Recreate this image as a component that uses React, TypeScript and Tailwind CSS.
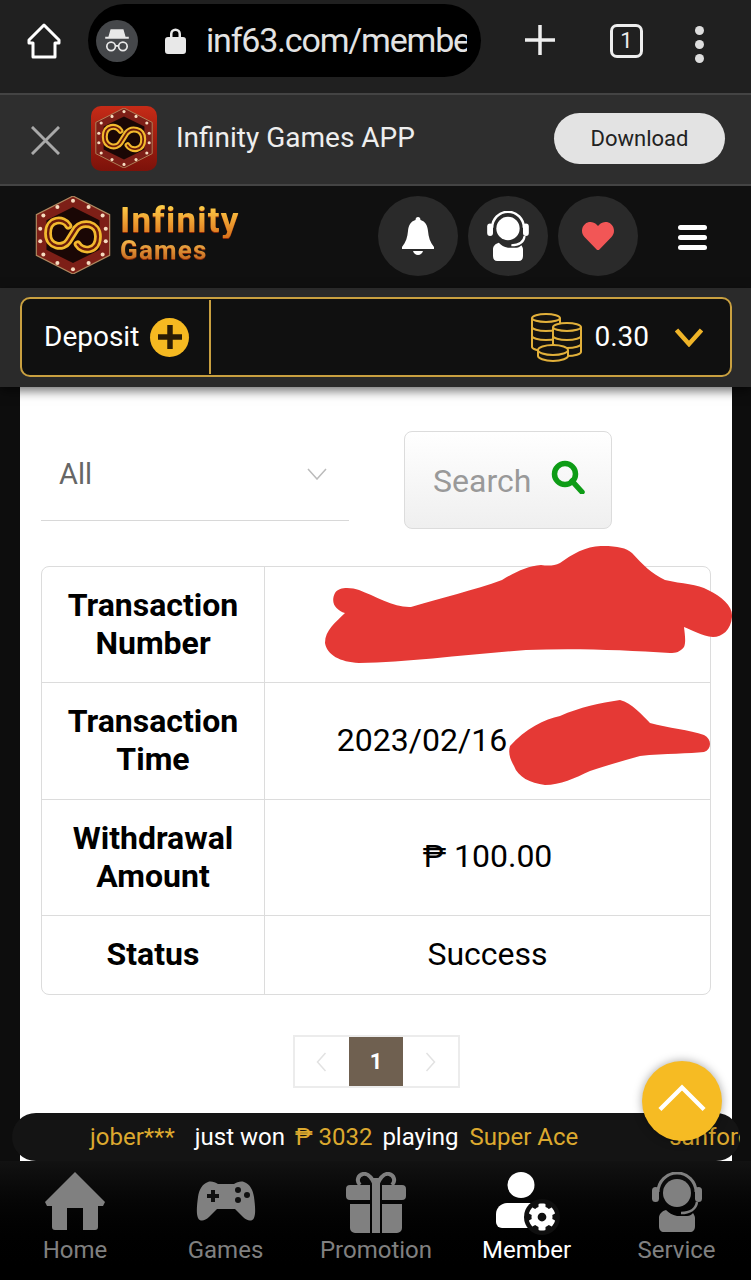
import React from 'react';
import { FaHeart, FaCog } from 'react-icons/fa';

const rows = [
  { label: ['Transaction', 'Number'], value: '', height: 'h-[115px]' },
  { label: ['Transaction', 'Time'], value: '2023/02/16', height: 'h-[117px]' },
  { label: ['Withdrawal', 'Amount'], value: '₱ 100.00', height: 'h-[116px]' },
  { label: ['Status'], value: 'Success', height: 'h-[79px]' },
];

const knotPath = 'M56 62C62 72 82 72 82 52C82 34 62 32 54 42L44 58C38 68 18 66 18 48C18 28 38 28 44 38';

const HexBadge = ({ className }: { className: string }) => {
  const dots = [
    [50, 6], [30, 14], [12, 25], [8, 42], [8, 58], [12, 75], [30, 86], [50, 94],
    [70, 86], [88, 75], [92, 58], [92, 42], [88, 25], [70, 14],
  ];
  return (
    <svg viewBox="0 0 100 100" className={className}>
      <polygon points="50,0 97,24 97,76 50,100 3,76 3,24" fill="#7d1f17" stroke="#b08a60" strokeWidth="1.5" />
      <polygon points="50,14 84,31 84,69 50,86 16,69 16,31" fill="#1a0705" />
      {dots.map(([cx, cy]) => (
        <circle key={`${cx}-${cy}`} cx={cx} cy={cy} r="2.6" fill="#f6dcc0" />
      ))}
      <path d={knotPath} fill="none" stroke="#f2b92e" strokeWidth="10" strokeLinecap="round" />
      <path d={knotPath} fill="none" stroke="#6a1a0a" strokeWidth="3" strokeLinecap="round" />
    </svg>
  );
};

const AgentIcon = ({ className }: { className: string }) => (
  <svg viewBox="0 0 50 60" className={className} fill="currentColor">
    <rect x="0" y="15" width="7" height="15" rx="3.5" />
    <rect x="43" y="15" width="7" height="15" rx="3.5" />
    <path d="M6 20A19 19 0 0 1 44 20" fill="none" stroke="currentColor" strokeWidth="3" />
    <circle cx="25" cy="21" r="14" />
    <path d="M7 54V46C7 42 10 39 14 38C17 41 20 43 25 44L35 44C38 44 40 42 41 41C42 43 43 44 43 46V54C43 58 41 60 38 60H12C9 60 7 58 7 54Z" />
    <path d="M45 30C44 37 38 41 29 41" fill="none" stroke="currentColor" strokeWidth="2.5" />
  </svg>
);

const Coins = () => (
  <svg viewBox="0 0 51 49" className="w-[51px] h-[49px]" fill="#141210" stroke="#e2b03a" strokeWidth="2">
    <path d="M1 5v29c0 2 6 4 14 4s14-2 14-4V5" />
    <ellipse cx="15" cy="5" rx="14" ry="4" />
    <path d="M1 14c0 2 6 4 14 4s14-2 14-4M1 23c0 2 6 4 14 4s14-2 14-4" fill="none" />
    <path d="M22 14v25c0 2 6 4 14 4s14-2 14-4V14" />
    <ellipse cx="36" cy="14" rx="14" ry="4" />
    <path d="M22 23c0 2 6 4 14 4s14-2 14-4M22 31c0 2 6 4 14 4s14-2 14-4" fill="none" />
    <path d="M7 37v6c0 2 6 5 15 5s15-3 15-5v-6" />
    <ellipse cx="22" cy="37" rx="15" ry="5" />
  </svg>
);

const navItems = [
  {
    label: 'Home',
    icon: (
      <svg viewBox="0 0 60 58" className="w-[60px] h-[58px]" fill="currentColor">
        <path d="M30 0 60 30l-2 4h-5v21a3 3 0 0 1-3 3H38V36H22v22H10a3 3 0 0 1-3-3V34H2l-2-4z" />
      </svg>
    ),
  },
  {
    label: 'Games',
    icon: (
      <svg viewBox="0 0 60 40" className="w-[60px] h-[40px] mt-[9px]" fill="currentColor">
        <path d="M12 1C15 0 19 1 22 3H38C41 1 45 0 48 1C54 3 57 9 58 16C59 24 60 32 58 37C56 41 51 40 47 36L39 28H21L13 36C9 40 4 41 2 37C0 32 1 24 2 16C3 9 6 3 12 1Z" />
        <path d="M15 9h4v4h4v4h-4v4h-4v-4h-4v-4h4z" fill="#101010" />
        <circle cx="42" cy="9" r="3" fill="#101010" />
        <circle cx="51" cy="14" r="3" fill="#101010" />
        <circle cx="42" cy="19" r="3" fill="#101010" />
      </svg>
    ),
  },
  {
    label: 'Promotion',
    icon: (
      <svg viewBox="0 0 60 61" className="w-[60px] h-[61px]" fill="currentColor">
        <path d="M29 13C26 6 22 1 17 2C12 3 10 9 14 13M31 13C34 6 38 1 43 2C48 3 50 9 46 13" fill="none" stroke="currentColor" strokeWidth="4" />
        <path d="M4 13h20v15H4a4 4 0 0 1-4-4v-7a4 4 0 0 1 4-4zM36 13h20a4 4 0 0 1 4 4v7a4 4 0 0 1-4 4H36z" />
        <path d="M26 6h8v55h-8zM4 32h20v29H9a5 5 0 0 1-5-5zM36 32h20v24a5 5 0 0 1-5 5H36z" />
      </svg>
    ),
  },
  {
    label: 'Member',
    active: true,
    icon: (
      <div className="relative w-[62px] h-[61px]">
        <svg viewBox="0 0 62 61" className="w-[62px] h-[61px]" fill="currentColor">
          <ellipse cx="25" cy="13" rx="13.500" ry="13" />
          <path d="M0 50V42c0-6 5-11 11-11h25c4 0 8 2 8 8v17H6a6 6 0 0 1-6-6z" />
        </svg>
        <div className="absolute right-[-2px] bottom-[-2px] w-[36px] h-[36px] rounded-full bg-[#0f0f0f] flex items-center justify-center">
          <FaCog className="w-[28px] h-[28px]" />
        </div>
      </div>
    ),
  },
  { label: 'Service', icon: <AgentIcon className="w-[50px] h-[60px]" /> },
];

export default function App() {
  return (
    <div className="relative w-[751px] h-[1280px] overflow-hidden flex flex-col bg-[#0d0d0d] font-['Roboto',sans-serif]">
      {/* browser toolbar */}
      <div className="h-[93px] shrink-0 bg-[#202020] flex items-start text-white">
        <svg viewBox="0 0 34 36" className="w-[34px] h-[36px] ml-[27px] mt-[23px]" fill="none" stroke="#fff" strokeWidth="3" strokeLinejoin="round">
          <path d="M17 2 32 17v3h-4v14H6V20H2v-3z" />
        </svg>
        <div className="w-[393px] h-[73px] mt-[4px] ml-[27px] rounded-full bg-black flex items-center overflow-hidden">
          <div className="w-[42px] h-[42px] ml-[8px] rounded-full bg-[#45474a] flex items-center justify-center">
            <svg viewBox="0 0 28 28" className="w-[30px] h-[30px]" fill="none" stroke="#e8e8e8">
              <path d="M8 3h12l2 7h3v2H3v-2h3z" fill="#e8e8e8" stroke="none" />
              <circle cx="8.5" cy="19" r="4" strokeWidth="1.6" />
              <circle cx="19.5" cy="19" r="4" strokeWidth="1.6" />
              <path d="M12.5 18.5h3" strokeWidth="1.6" />
            </svg>
          </div>
          <svg viewBox="0 0 21 27" className="w-[21px] h-[27px] ml-[27px]" fill="#e8e8e8">
            <path d="M5 10V7a5.500 5.500 0 0 1 11 0v3h2a3 3 0 0 1 3 3v11a3 3 0 0 1-3 3H3a3 3 0 0 1-3-3V13a3 3 0 0 1 3-3zm2.500 0h6V7a3 3 0 0 0-6 0z" />
          </svg>
          <span className="ml-[20px] w-[261px] overflow-hidden whitespace-nowrap text-[34px] tracking-[-1.2px] text-[#e3e3e3]">inf63.com/member</span>
        </div>
        <svg viewBox="0 0 30 30" className="w-[30px] h-[30px] ml-[44px] mt-[25px]" stroke="#eee" strokeWidth="3.500">
          <path d="M15 0v30M0 15h30" />
        </svg>
        <div className="w-[33px] h-[34px] ml-[55px] mt-[24px] rounded-[7px] border-[3px] border-[#eee] flex items-center justify-center text-[22px] leading-none text-[#eee]">1</div>
        <div className="ml-[52px] mt-[26px] flex flex-col gap-[5px]">
          <span className="w-[9px] h-[9px] rounded-full bg-[#ddd]" />
          <span className="w-[9px] h-[9px] rounded-full bg-[#ddd]" />
          <span className="w-[9px] h-[9px] rounded-full bg-[#ddd]" />
        </div>
      </div>

      {/* app download banner */}
      <div className="h-[93px] shrink-0 bg-[#2e2e2e] border-t-2 border-b-2 border-[#444] pb-[3px] flex items-center">
        <svg viewBox="0 0 30 30" className="w-[29px] h-[29px] ml-[31px] mt-[5px]" stroke="#a9a9a9" strokeWidth="3">
          <path d="M1 1l28 28M29 1 1 29" />
        </svg>
        <div className="w-[66px] h-[65px] ml-[31px] rounded-[10px] bg-gradient-to-b from-[#c62b17] to-[#7c120a] flex items-center justify-center">
          <HexBadge className="w-[60px] h-[60px]" />
        </div>
        <span className="ml-[19px] text-[28px] text-[#eee]">Infinity Games APP</span>
        <button className="w-[171px] h-[51px] ml-auto mr-[26px] rounded-full bg-[#e3e3e3] text-[22px] text-[#222]">Download</button>
      </div>

      {/* site header */}
      <div className="h-[102px] shrink-0 bg-[#101010] flex items-center">
        <HexBadge className="w-[78px] h-[78px] ml-[34px] mb-[4px]" />
        <div className="ml-[8px] mb-[8px] flex flex-col font-bold [filter:drop-shadow(0_1px_0_#8a2a08)]">
          <span className="text-[35px] leading-[34px] tracking-[1.2px] bg-gradient-to-b from-[#ffd24a] to-[#d9701a] bg-clip-text text-transparent">Infinity</span>
          <span className="text-[26px] leading-[24px] tracking-[1.2px] bg-gradient-to-b from-[#f8c050] to-[#c0601a] bg-clip-text text-transparent">Games</span>
        </div>
        <div className="ml-auto mb-[2px] flex items-center gap-[10px] text-white">
          <div className="w-[80px] h-[80px] rounded-full bg-[#2a2a2a] flex items-center justify-center">
            <svg viewBox="0 0 32 38" className="w-[32px] h-[38px]" fill="currentColor">
              <path d="M16 0c1.500 0 2.500 1.200 2.500 3 5 1.500 7 5.500 7.500 11 .5 6 2 11 6 16v2H0v-2c4-5 5.500-10 6-16C6.500 8.500 8.500 4.500 13.500 3 13.500 1.200 14.500 0 16 0z" />
              <path d="M11 34h10c-.5 2-2.500 4-5 4s-4.500-2-5-4z" />
            </svg>
          </div>
          <div className="w-[80px] h-[80px] rounded-full bg-[#2a2a2a] flex items-center justify-center">
            <AgentIcon className="w-[42px] h-[50px]" />
          </div>
          <div className="w-[80px] h-[80px] rounded-full bg-[#2a2a2a] flex items-center justify-center">
            <FaHeart className="w-[34px] h-[32px] text-[#f25656]" />
          </div>
        </div>
        <div className="ml-[40px] mr-[44px] flex flex-col gap-[5px]">
          <span className="w-[29px] h-[5px] rounded-sm bg-white" />
          <span className="w-[29px] h-[5px] rounded-sm bg-white" />
          <span className="w-[29px] h-[5px] rounded-sm bg-white" />
        </div>
      </div>

      {/* wallet bar */}
      <div className="relative z-10 h-[99px] shrink-0 bg-[#2a2a2a] pl-[20px] pr-[19px] pt-[9px] shadow-[0_4px_10px_rgba(0,0,0,0.55)]">
        <div className="h-[80px] rounded-[10px] border-2 border-[#c9a040] bg-[#101010] flex items-center text-white">
          <span className="ml-[22px] text-[28px]">Deposit</span>
          <div className="w-[39px] h-[39px] ml-[11px] rounded-full bg-[#f5b921] flex items-center justify-center">
            <svg viewBox="0 0 22 22" className="w-[24px] h-[24px]" stroke="#2a1c05" strokeWidth="5">
              <path d="M11 0v22M0 11h22" />
            </svg>
          </div>
          <div className="w-[2px] h-[74px] ml-[20px] bg-[#c9a040]" />
          <div className="ml-auto flex items-center">
            <Coins />
            <span className="ml-[12px] text-[28px]">0.30</span>
            <svg viewBox="0 0 28 19" className="w-[28px] h-[19px] ml-[26px] mr-[27px]" fill="none" stroke="#efb428" strokeWidth="4.500">
              <path d="M1.500 2 14 16 26.500 2" />
            </svg>
          </div>
        </div>
      </div>

      {/* page content */}
      <div className="flex-1 min-h-0 ml-[20px] mr-[19px] bg-white px-[21px] pt-[44px]">
        <div className="flex items-start">
          <div className="relative w-[308px] h-[90px] border-b border-[#d8d8d8] flex items-start">
            <span className="ml-[18px] text-[29px] leading-[86px] text-[#666]">All</span>
            <svg viewBox="0 0 20 12" className="absolute left-[266px] top-[37px] w-[20px] h-[12px]" fill="none" stroke="#bbb" strokeWidth="1.500">
              <path d="M1 1l9 10 9-10" />
            </svg>
          </div>
          <button className="w-[208px] h-[98px] ml-[55px] rounded-[8px] border border-[#dcdcdc] bg-gradient-to-b from-white to-[#efefef] flex items-center">
            <span className="ml-[28px] mt-[1px] text-[32px] text-[#999]">Search</span>
            <svg viewBox="0 0 34 34" className="w-[34px] h-[34px] ml-[20px] mb-[6px]" fill="none" stroke="#0e9c16" strokeWidth="5.500">
              <circle cx="14" cy="14" r="10.500" />
              <path d="M21 21 31 32" strokeLinecap="round" />
            </svg>
          </button>
        </div>

        <div className="mt-[37px] rounded-[8px] border border-[#dcdcdc] text-black">
          {rows.map((row, i) => (
            <div key={row.label[0] + i} className={`grid grid-cols-[223px_1fr] ${row.height} ${i > 0 ? 'border-t border-[#dcdcdc]' : ''}`}>
              <div className="flex flex-col items-center justify-center pb-[2px] text-[32px] leading-[38px] font-bold border-r border-[#dcdcdc]">
                {row.label.map((line) => (
                  <span key={line}>{line}</span>
                ))}
              </div>
              <div className="relative flex items-center justify-center pb-[3px] text-[32px]">
                {i === 1 ? <span className="mr-[131px]">{row.value}</span> : row.value}
                {i === 0 && (
                  <svg viewBox="320 540 420 130" className="absolute left-[55px] top-[-27px] w-[420px] h-[130px]" fill="#e53935">
                    <path d="M335 593C340 586 352 588 359 590C375 596 395 608 411 607C440 598 475 590 502 580C515 572 528 566 541 565C548 566 554 566 560 563C572 554 588 545 603 546C618 546 626 548 632 553C642 564 652 574 665 580C682 584 698 584 708 590C722 597 733 606 732 617C731 630 722 637 713 637C702 636 692 630 684 627C685 636 686 642 684 647C680 652 676 653 670 653C625 650 575 648 526 650C470 654 410 662 359 663C340 662 327 655 325 643C325 630 336 622 345 613C336 610 330 603 335 593Z" />
                  </svg>
                )}
                {i === 1 && (
                  <svg viewBox="505 695 210 92" className="absolute left-[240px] top-[13px] w-[210px] h-[92px]" fill="#e53935">
                    <path d="M510 745C525 728 545 718 560 715C580 706 600 702 620 699C632 702 642 714 650 722C668 727 690 729 704 734C712 738 712 748 704 751C690 753 665 752 640 755C622 760 605 765 590 770C575 777 560 784 545 784C530 782 518 776 514 765C510 758 508 752 510 745Z" />
                  </svg>
                )}
              </div>
            </div>
          ))}
        </div>

        <div className="mt-[40px] flex justify-center">
          <div className="h-[53px] w-[167px] border-2 border-[#ececec] flex items-center">
            <div className="flex-1 flex justify-center">
              <svg viewBox="0 0 10 20" className="w-[11px] h-[20px]" fill="none" stroke="#e2e2e2" strokeWidth="1.500"><path d="M9 1 1 10l8 9" /></svg>
            </div>
            <div className="w-[54px] h-[49px] bg-[#6f6050] flex items-center justify-center text-[22px] font-bold text-white">1</div>
            <div className="flex-1 flex justify-center">
              <svg viewBox="0 0 10 20" className="w-[11px] h-[20px]" fill="none" stroke="#e2e2e2" strokeWidth="1.500"><path d="m1 1 8 9-8 9" /></svg>
            </div>
          </div>
        </div>
      </div>

      {/* bottom navigation */}
      <div className="relative z-10 h-[119px] shrink-0 bg-gradient-to-b from-[#121212] to-black grid grid-cols-[150px_151px_150px_151px_149px] pt-[11px]">
        {navItems.map((item) => (
          <div key={item.label} className={`flex flex-col items-center ${item.active ? 'text-white' : 'text-[#808080]'}`}>
            <div className="h-[61px] flex items-start justify-center">{item.icon}</div>
            <span className="mt-[2px] text-[24px] leading-[30px]">{item.label}</span>
          </div>
        ))}
      </div>

      {/* win ticker */}
      <div className="absolute z-20 left-[12px] top-[1113px] w-[728px] h-[48px] rounded-[24px] bg-[#141414] overflow-hidden whitespace-nowrap flex items-center text-[24px] text-white">
        <span className="ml-[78px] text-[#dca92f]">jober***</span>
        <span className="ml-[20px]">just won</span>
        <span className="ml-[10px] text-[#dca92f]">₱ 3032</span>
        <span className="ml-[10px]">playing</span>
        <span className="ml-[11px] text-[#dca92f]">Super Ace</span>
        <span className="ml-[91px] text-[#dca92f]">sanford</span>
      </div>

      {/* back to top */}
      <div className="absolute z-30 left-[642px] top-[1061px] w-[80px] h-[80px] rounded-full bg-[#f6bb23] shadow-[0_0_10px_rgba(0,0,0,0.35)] flex items-center justify-center">
        <svg viewBox="0 0 50 28" className="w-[48px] h-[28px] mb-[6px]" fill="none" stroke="#fff" strokeWidth="4.500">
          <path d="M2 26 25 3l23 23" />
        </svg>
      </div>
    </div>
  );
}
